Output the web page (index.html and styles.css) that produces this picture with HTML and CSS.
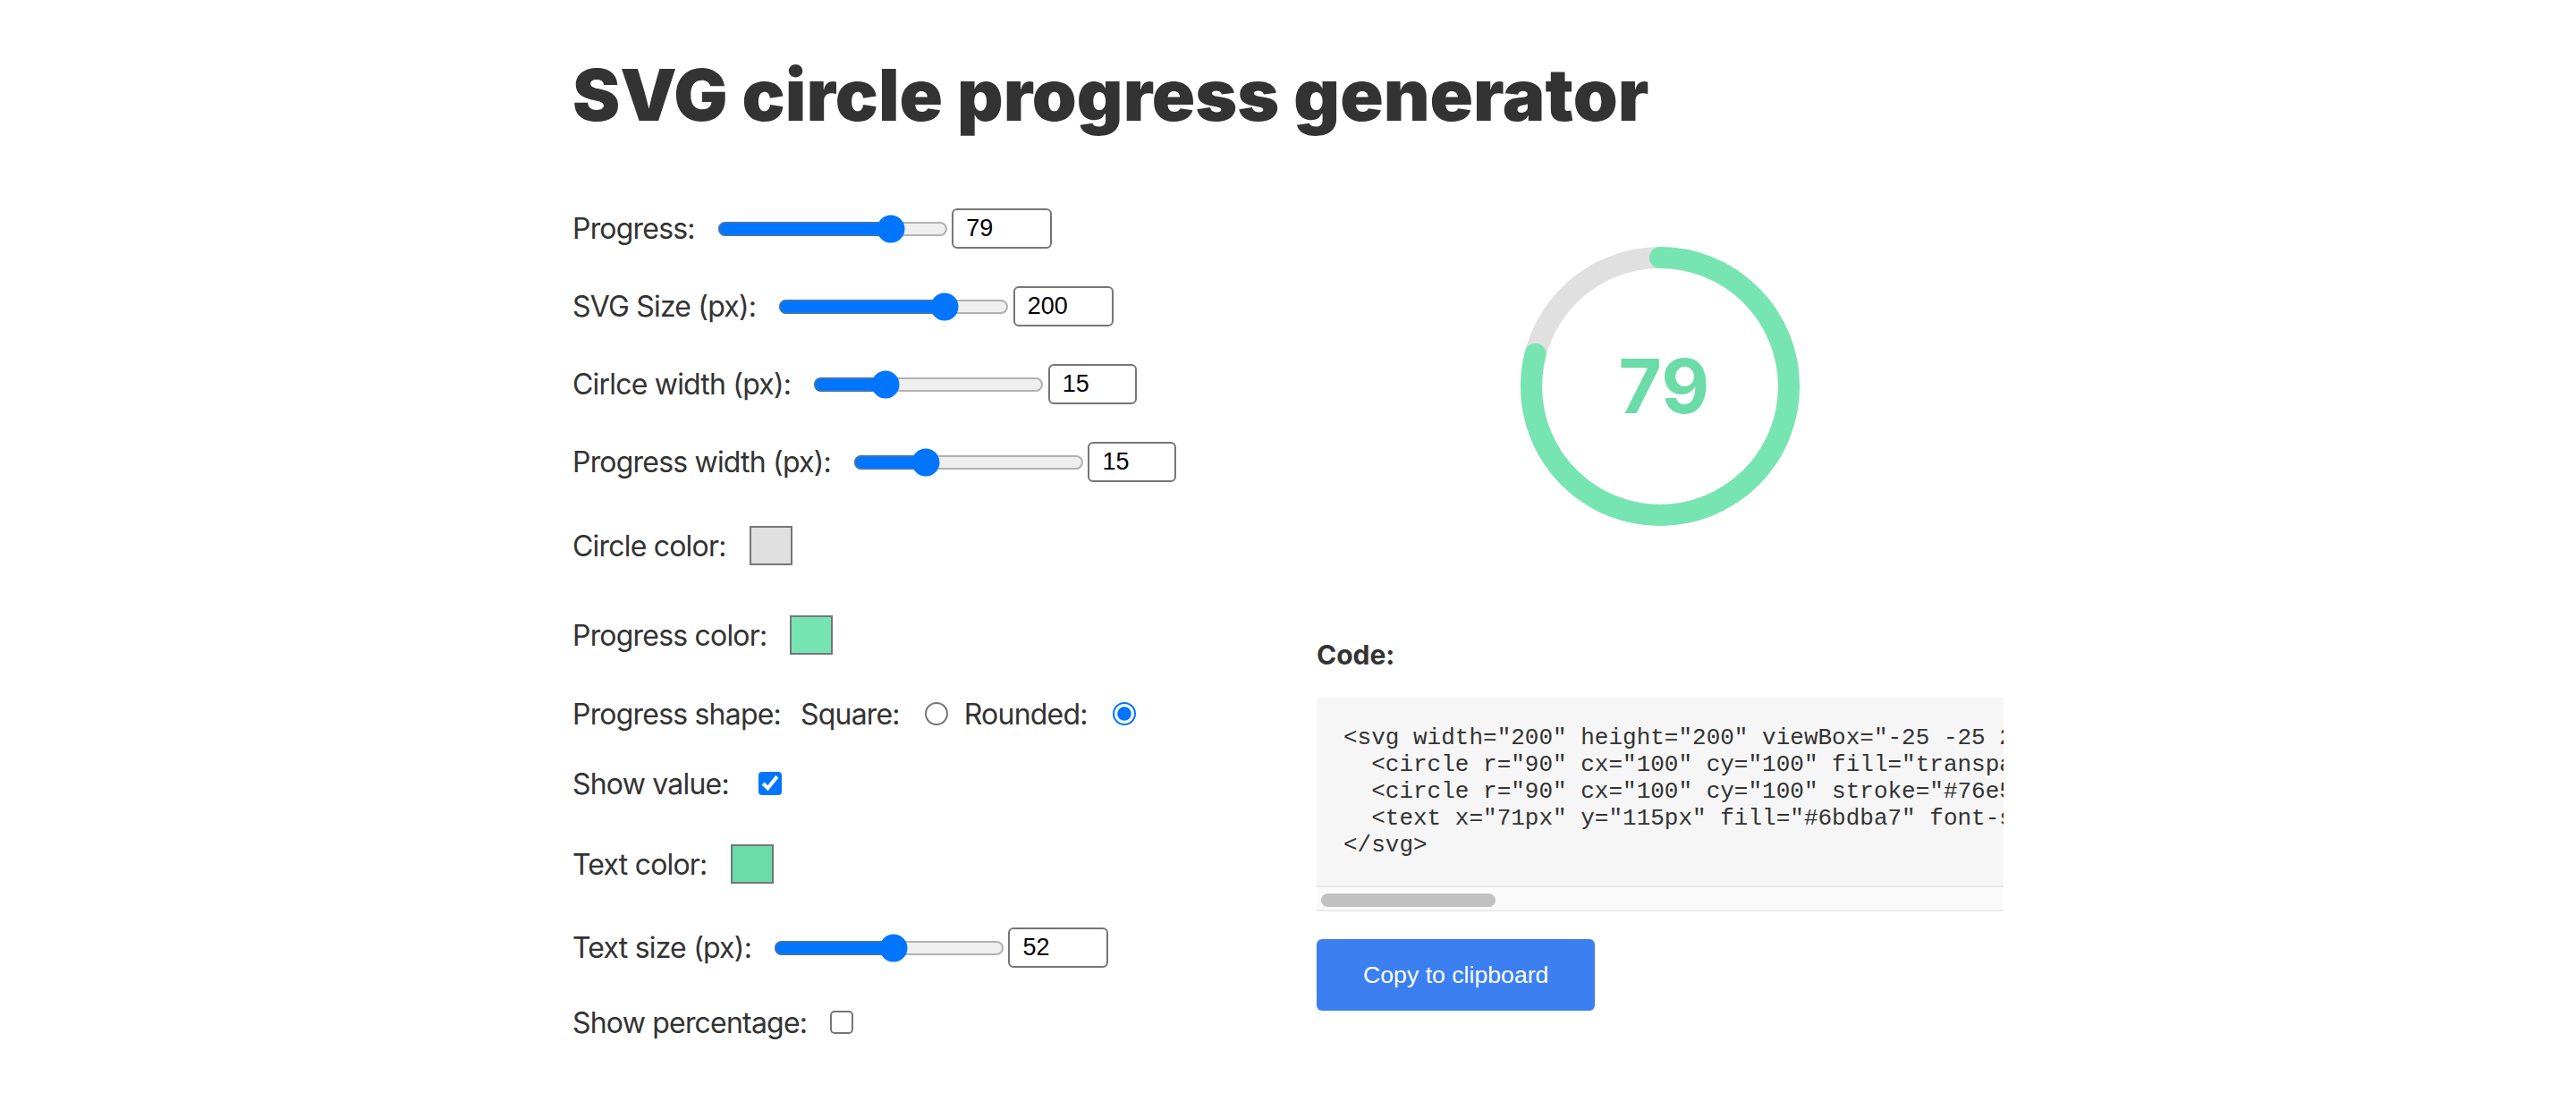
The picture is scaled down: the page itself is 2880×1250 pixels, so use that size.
FILE: index.html
```html
<!DOCTYPE html>
<html lang="en">
<head>
<meta charset="utf-8">
<title>SVG circle progress generator</title>
<link rel="stylesheet" href="styles.css">
</head>
<body>
<div class="page">
  <main class="container">
    <h1 class="title">SVG circle progress generator</h1>
    <div class="layout">
      <section class="controls">
        <div class="row row-slider">
          <label class="label" for="progress">Progress:</label>
          <input class="range" type="range" id="progress" min="0" max="100" value="79">
          <input class="num" type="text" value="79">
        </div>
        <div class="row row-slider">
          <label class="label" for="size">SVG Size (px):</label>
          <input class="range" type="range" id="size" min="50" max="250" value="200">
          <input class="num" type="text" value="200">
        </div>
        <div class="row row-slider">
          <label class="label" for="cwidth">Cirlce width (px):</label>
          <input class="range" type="range" id="cwidth" min="1" max="50" value="15">
          <input class="num num-narrow" type="text" value="15">
        </div>
        <div class="row row-slider">
          <label class="label" for="pwidth">Progress width (px):</label>
          <input class="range" type="range" id="pwidth" min="1" max="50" value="15">
          <input class="num num-narrow" type="text" value="15">
        </div>
        <div class="row row-color">
          <label class="label" for="ccolor">Circle color:</label>
          <input class="swatch" type="color" id="ccolor" value="#e0e0e0">
        </div>
        <div class="row row-color">
          <label class="label" for="pcolor">Progress color:</label>
          <input class="swatch" type="color" id="pcolor" value="#76e5b1">
        </div>
        <div class="row row-radio">
          <span class="label label-tight">Progress shape:</span>
          <label class="label" for="square">Square:</label>
          <input class="radio" type="radio" name="shape" id="square">
          <label class="label label-after" for="rounded">Rounded:</label>
          <input class="radio" type="radio" name="shape" id="rounded" checked>
        </div>
        <div class="row row-check">
          <label class="label" for="showval">Show value:</label>
          <input class="check check-wide" type="checkbox" id="showval" checked>
        </div>
        <div class="row row-color">
          <label class="label" for="tcolor">Text color:</label>
          <input class="swatch" type="color" id="tcolor" value="#6bdba7">
        </div>
        <div class="row row-slider">
          <label class="label" for="tsize">Text size (px):</label>
          <input class="range" type="range" id="tsize" min="0" max="100" value="52">
          <input class="num" type="text" value="52">
        </div>
        <div class="row row-check">
          <label class="label" for="showpct">Show percentage:</label>
          <input class="check" type="checkbox" id="showpct">
        </div>
      </section>
      <section class="output">
        <svg class="preview" width="200" height="200" viewBox="-25 -25 250 250" xmlns="http://www.w3.org/2000/svg">
          <circle r="90" cx="100" cy="100" fill="transparent" stroke="#e0e0e0" stroke-width="15"></circle>
          <circle r="90" cx="100" cy="100" stroke="#76e5b1" stroke-width="15" stroke-linecap="round" stroke-dashoffset="118.75" fill="transparent" stroke-dasharray="565.48" transform="rotate(-90 100 100)"></circle>
          <text class="preview-value" x="71" y="119" fill="#6bdba7" font-size="52">79</text>
        </svg>
        <div class="code-label">Code:</div>
        <pre class="code">&lt;svg width="200" height="200" viewBox="-25 -25 250 250" version="1.1" xmlns="http://www.w3.org/2000/svg" style="transform:rotate(-90deg)"&gt;
  &lt;circle r="90" cx="100" cy="100" fill="transparent" stroke="#e0e0e0" stroke-width="15px"&gt;&lt;/circle&gt;
  &lt;circle r="90" cx="100" cy="100" stroke="#76e5b1" stroke-width="15px" stroke-linecap="round" stroke-dashoffset="118.692px" fill="transparent" stroke-dasharray="565.48px"&gt;&lt;/circle&gt;
  &lt;text x="71px" y="115px" fill="#6bdba7" font-size="52px" font-weight="bold" style="transform:rotate(90deg) translate(0px, -196px)"&gt;79&lt;/text&gt;
&lt;/svg&gt;</pre>
        <div class="scrollbar"><div class="scrollbar-thumb"></div></div>
        <button class="copy-btn" type="button">Copy to clipboard</button>
      </section>
    </div>
  </main>
</div>
</body>
</html>
```
FILE: styles.css
```css
html, body {
  margin: 0;
  padding: 0;
  background: #ffffff;
}

.page {
  zoom: 2;
  width: 1440px;
  font-family: "Inter", "Noto Sans", sans-serif;
  color: #333333;
}

.container {
  width: 800px;
  margin: 0 auto;
}

.title {
  margin: 29px 0 29px;
  font-size: 40px;
  line-height: 48px;
  font-weight: 900;
  color: #333333;
}

.layout {
  display: grid;
  grid-template-columns: 384px 384px;
  column-gap: 32px;
}

.controls {
  display: flex;
  flex-direction: column;
}

.row {
  display: flex;
  align-items: center;
  font-size: 16px;
}

.row-slider { height: 43.5px; }
.row-color { height: 50px; }
.row-radio { height: 38px; }
.row-check { height: 40px; }

.label {
  margin-right: 10.5px;
  white-space: nowrap;
  letter-spacing: -0.4px;
}

.label-tight {
  margin-right: 11px;
}

.label-after {
  margin-left: 6px;
}

.range {
  margin: 0 0 0 2px;
}

.num {
  box-sizing: border-box;
  width: 56px;
  height: 22.5px;
  margin: 0 0 0 2.2px;
  padding: 2px 7px;
  font-family: "Liberation Sans", Arial, sans-serif;
  font-size: 13.5px;
  color: #000000;
  border: 1px solid #767676;
  border-radius: 3px;
  background: #ffffff;
}

.num-narrow {
  width: 49.5px;
}

.swatch {
  -webkit-appearance: none;
  appearance: none;
  box-sizing: border-box;
  width: 24px;
  height: 22px;
  margin: 0 0 0 2.5px;
  padding: 0;
  border: 1px solid #767676;
  background: none;
  cursor: pointer;
}

.swatch::-webkit-color-swatch-wrapper {
  padding: 0;
}

.swatch::-webkit-color-swatch {
  border: none;
}

.radio {
  margin: 0 3px 0 3.5px;
}

.check {
  margin: 0 3px 0 2.5px;
}

.check-wide {
  margin-left: 6px;
}

.output {
  display: flex;
  flex-direction: column;
}

.preview {
  display: block;
  margin: 10px auto 0;
}

.preview-value {
  font-family: "Inter", sans-serif;
  font-weight: 700;
}

.code-label {
  margin-top: 41px;
  font-size: 15px;
  line-height: 18px;
  font-weight: 700;
}

.code {
  margin: 15px 0 0;
  padding: 15px;
  background: #f6f6f6;
  font-family: "Liberation Mono", "Courier New", monospace;
  font-size: 13px;
  line-height: 15px;
  color: #333333;
  white-space: pre;
  overflow: hidden;
}

.scrollbar {
  box-sizing: border-box;
  height: 14.5px;
  padding: 3.5px 2.5px;
  background: #fafafa;
  border-top: 1px solid #e8e8e8;
  border-bottom: 1px solid #ececec;
}

.scrollbar-thumb {
  width: 97.5px;
  height: 7.5px;
  border-radius: 4px;
  background: #c1c1c1;
}

.copy-btn {
  align-self: flex-start;
  margin-top: 15.5px;
  height: 40px;
  padding: 0 26px;
  border: none;
  border-radius: 3px;
  background: #3b7ff0;
  color: #ffffff;
  font-family: "Liberation Sans", Arial, sans-serif;
  font-size: 13.33px;
  cursor: pointer;
}
```
